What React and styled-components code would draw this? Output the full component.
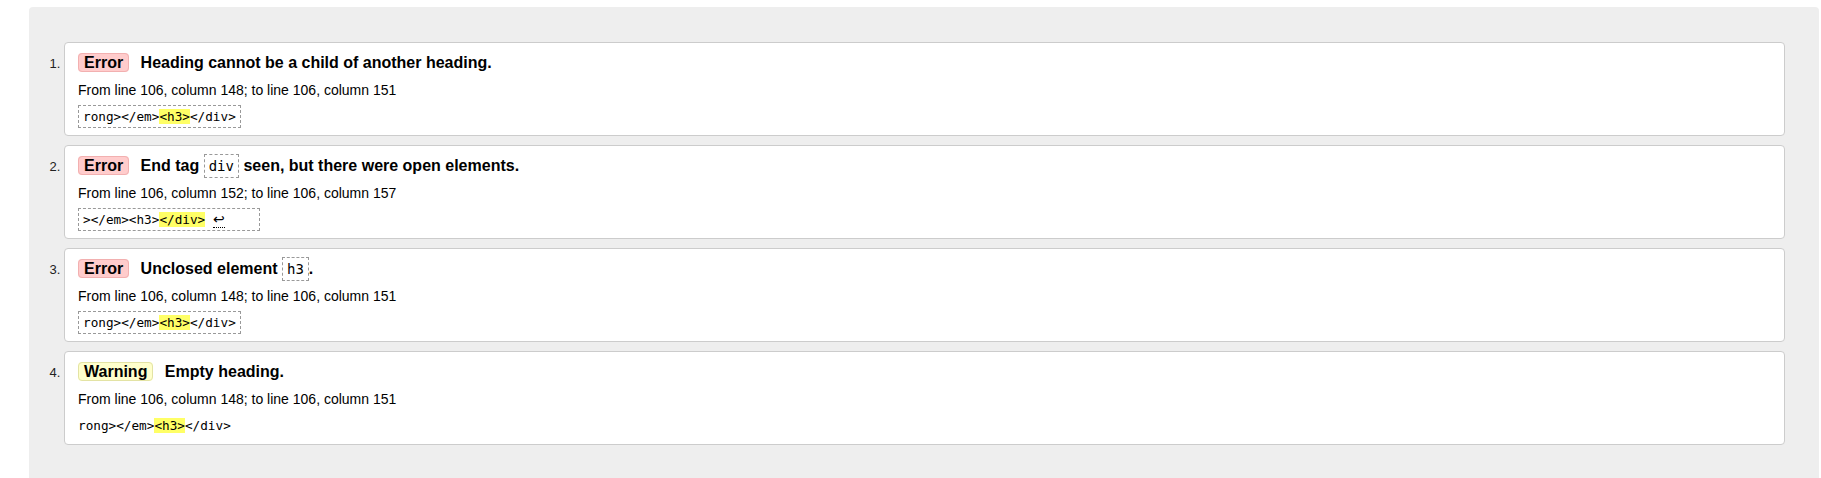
import React from 'react'
import styled, { createGlobalStyle } from 'styled-components'

const GlobalStyle = createGlobalStyle`
	html, body {
		margin: 0;
		padding: 0;
		background: #fff;
	}
	body {
		font-family: 'Liberation Sans', Arial, sans-serif;
		color: #000;
	}
`

const Page = styled.div`
	padding: 7px 2px 0 29px;
`

const Results = styled.ol`
	margin: 0;
	padding: 35px 34px 40px 35px;
	background: #eee;
	border-radius: 4px 4px 0 0;
	list-style: decimal outside;
`

const Message = styled.li`
	background: #fff;
	border: 1px solid #ccc;
	border-radius: 4px;
	padding: 0 13px 7px;
	margin-bottom: 9px;
	font-size: 13px;
	color: #000;

	&::marker {
		font-size: 13px;
		color: #222;
	}

	&:last-child {
		margin-bottom: 0;
	}
`

const Title = styled.p`
	margin: 10px 0 0;
	font-size: 16px;
	font-weight: bold;
	line-height: 20px;
`

const Badge = styled.strong`
	display: inline;
	padding: 0 5px;
	margin-right: 7px;
	border-radius: 4px;
	background: ${(p) => (p.$kind === 'warning' ? '#ffc' : '#fcc')};
	border: 1px solid ${(p) => (p.$kind === 'warning' ? '#e3e3a4' : '#f2b0b0')};
`

const InlineCode = styled.code`
	display: inline;
	font-family: 'DejaVu Sans Mono', 'Liberation Mono', monospace;
	font-size: 14px;
	font-weight: normal;
	padding: 3px 4px;
	border: 1px dashed #999;
`

const Location = styled.p`
	margin: 9px 0 0;
	font-size: 14px;
	line-height: 17px;
`

const Extract = styled.div`
	display: flex;
	align-items: flex-start;
	margin-top: 6px;
`

const CodeBox = styled.code`
	font-family: 'DejaVu Sans Mono', 'Liberation Mono', monospace;
	font-size: 12.7px;
	line-height: 17px;
	white-space: pre;
	padding: ${(p) => (p.$boxed ? '2px 4px' : '3px 0')};
	border: ${(p) => (p.$boxed ? '1px dashed #999' : 'none')};
`

const Mark = styled.b`
	font-weight: normal;
	background: #ff6;
`

const LineBreak = styled.abbr`
	font-family: 'DejaVu Sans', sans-serif;
	font-size: 14px;
	text-decoration: none;
	border-bottom: 1px dotted #000;
`

const messages = [
	{
		kind: 'error',
		title: <>Heading cannot be a child of another heading.</>,
		location: 'From line 106, column 148; to line 106, column 151',
		extract: (
			<>
				rong&gt;&lt;/em&gt;<Mark>&lt;h3&gt;</Mark>&lt;/div&gt;
			</>
		),
		boxed: true,
	},
	{
		kind: 'error',
		title: (
			<>
				End tag <InlineCode>div</InlineCode> seen, but there were open elements.
			</>
		),
		location: 'From line 106, column 152; to line 106, column 157',
		extract: (
			<>
				&gt;&lt;/em&gt;&lt;h3&gt;<Mark>&lt;/div&gt;</Mark> <LineBreak title='line break'>↩</LineBreak>
				{'    '}
			</>
		),
		boxed: true,
	},
	{
		kind: 'error',
		title: (
			<>
				Unclosed element <InlineCode>h3</InlineCode>.
			</>
		),
		location: 'From line 106, column 148; to line 106, column 151',
		extract: (
			<>
				rong&gt;&lt;/em&gt;<Mark>&lt;h3&gt;</Mark>&lt;/div&gt;
			</>
		),
		boxed: true,
	},
	{
		kind: 'warning',
		title: <>Empty heading.</>,
		location: 'From line 106, column 148; to line 106, column 151',
		extract: (
			<>
				rong&gt;&lt;/em&gt;<Mark>&lt;h3&gt;</Mark>&lt;/div&gt;
			</>
		),
		boxed: false,
	},
]

export default function App() {
	return (
		<>
			<GlobalStyle />
			<Page>
				<Results>
					{messages.map((m, i) => (
						<Message key={i}>
							<Title>
								<Badge $kind={m.kind}>{m.kind === 'warning' ? 'Warning' : 'Error'}</Badge> {m.title}
							</Title>
							<Location>{m.location}</Location>
							<Extract>
								<CodeBox $boxed={m.boxed}>{m.extract}</CodeBox>
							</Extract>
						</Message>
					))}
				</Results>
			</Page>
		</>
	)
}
